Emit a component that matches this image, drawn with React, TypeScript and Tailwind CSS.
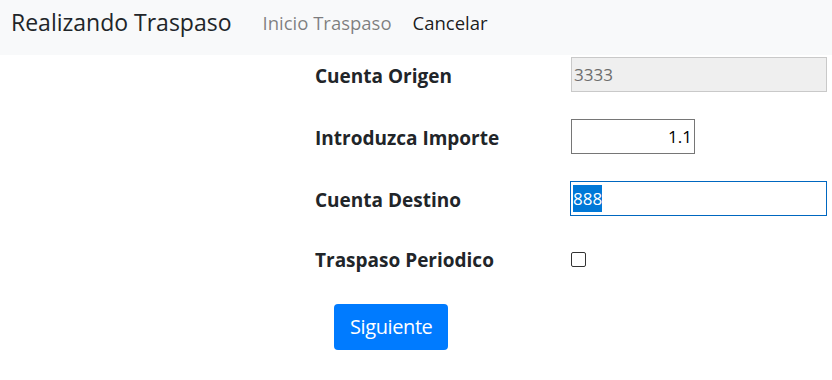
const font = { fontFamily: '"Open Sans", "Noto Sans", sans-serif' };

const Row = ({ label, children }: { label: string; children: React.ReactNode }) => (
  <div className="flex items-center h-[35px] mb-[27px]">
    <div className="w-[256px] font-bold text-[19px] text-[#212529] pt-[4px]">{label}</div>
    <div className="flex-1 flex items-center">{children}</div>
  </div>
);

const App = () => {
  return (
    <div className="w-[832px] h-[380px] bg-white" style={font}>
      <nav className="h-[55px] bg-[#f8f9fa] flex items-center pl-[11px] pb-[10px]">
        <span className="text-[23px] text-[#212529] mr-[31px]">Realizando Traspaso</span>
        <span className="text-[18.5px] text-black/50 mr-[21px]">Inicio Traspaso</span>
        <span className="text-[18.5px] text-black/90">Cancelar</span>
      </nav>
      <div className="pl-[315px] pr-[5px] pt-[2px]">
        <Row label="Cuenta Origen">
          <div className="w-[256px] h-[35px] border border-[#c9c9c9] bg-[#efefef] text-[#6d6d6d] text-[17px] flex items-center pl-[2px]">
            3333
          </div>
        </Row>
        <Row label="Introduzca Importe">
          <div className="w-[124px] h-[35px] border border-[#767676] bg-white text-black text-[17px] flex items-center justify-end pr-[2px]">
            1.1
          </div>
        </Row>
        <Row label="Cuenta Destino">
          <div className="w-[257px] h-[35px] border border-[#0067c0] bg-white text-[17px] flex items-center pl-[2px]">
            <span className="bg-[#0078d7] text-white leading-[27px]">888</span>
          </div>
        </Row>
        <div className="flex items-center h-[20px] mt-[33px]">
          <div className="w-[256px] font-bold text-[19px] text-[#212529] mt-[3px]">Traspaso Periodico</div>
          <div className="w-[15px] h-[15px] border border-[#333] bg-white rounded-[2px]" />
        </div>
        <div className="pl-[19px] mt-[35px]">
          <button className="h-[46px] px-[16px] rounded-[4px] bg-[#007bff] text-white text-[20px] tracking-[-0.4px]">
            Siguiente
          </button>
        </div>
      </div>
    </div>
  );
};

export default App;
